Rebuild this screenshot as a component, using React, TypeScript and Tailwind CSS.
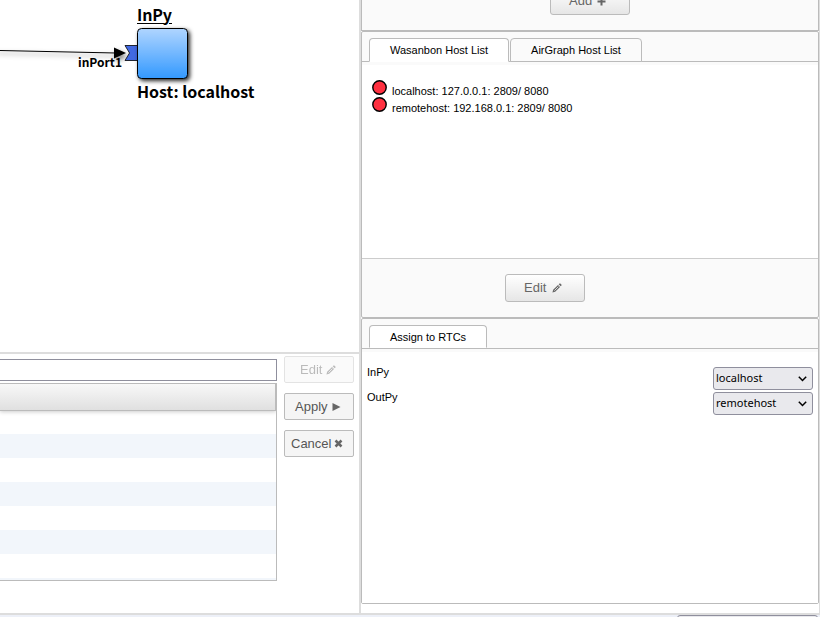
import React from "react";

const Pencil = ({ className = "" }: { className?: string }) => (
  <svg className={className} width="10" height="10" viewBox="0 0 10 10">
    <path d="M.4 9.6L1.200 6.800L6 2L8 4L3.200 8.800z" fill="currentColor" />
    <path d="M6.700 1.300L8 .2L9.800 2L8.700 3.300z" fill="currentColor" />
    <path d="M2.400 7.600L6.400 3.600" stroke="#f4f4f4" strokeWidth=".8" />
  </svg>
);

function Tab({ label, size, active = false }: { label: string; size: string; active?: boolean }) {
  return (
    <div
      className={`${size} flex items-center justify-center rounded-t-[4px] border border-[#bbb] text-[11px] text-black ${
        active ? "border-b-white bg-white" : "bg-[#fafafa]"
      }`}
    >
      {label}
    </div>
  );
}

function Host({ text }: { text: string }) {
  return (
    <div className="flex h-[17px] items-start gap-[5px] text-[11px] leading-[13px] text-black">
      <svg width="15" height="15" viewBox="0 0 15 15">
        <circle cx="7.500" cy="7.500" r="6.700" fill="#ff3040" stroke="#000" strokeWidth="1.400" />
      </svg>
      <span className="pt-[5px]">{text}</span>
    </div>
  );
}

function Assign({ name, host }: { name: string; host: string }) {
  return (
    <div className="flex h-[25px] items-start justify-between pl-[5px] pr-[5px] text-[11px] leading-[13px] text-black">
      <span className="pt-px">{name}</span>
      <div className="mt-[2px] flex h-[23px] w-[100px] items-center justify-between rounded-[3px] border border-[#8f8f9d] bg-[#e9e9ed] pl-[2px] pr-[5px] font-['Noto_Sans',sans-serif]">
        <span className="pb-[2px]">{host}</span>
        <svg width="9" height="6" viewBox="0 0 9 6">
          <path d="M.8.8l3.700 3.700L8.200.8" fill="none" stroke="#000" strokeWidth="1.500" />
        </svg>
      </div>
    </div>
  );
}

function Diagram() {
  return (
    <svg className="block h-[352px] w-[359px]" viewBox="0 0 359 352">
      <defs>
        <linearGradient id="block" x1="0" y1="0" x2="0" y2="1">
          <stop offset="0" stopColor="#b0d5ff" />
          <stop offset="1" stopColor="#3399ff" />
        </linearGradient>
        <filter id="shadow" x="-30%" y="-30%" width="170%" height="170%">
          <feDropShadow dx="2" dy="2" stdDeviation="2.200" floodColor="#000" floodOpacity=".85" />
        </filter>
        <filter id="lineShadow" filterUnits="userSpaceOnUse" x="-10" y="35" width="150" height="40">
          <feDropShadow dx="2" dy="3" stdDeviation="2.500" floodColor="#000" floodOpacity=".5" />
        </filter>
      </defs>
      <g filter="url(#lineShadow)">
        <path d="M-5 50.400L116 53" stroke="#000" strokeWidth="1" />
        <path d="M114 47.500L126 53L114 58.500z" fill="#000" />
      </g>
      <path d="M125 45.500H138V60.500H125L129.500 53z" fill="#4169e1" stroke="#000" strokeWidth=".8" />
      <rect x="137.500" y="28.500" width="50" height="50" rx="4" fill="url(#block)" stroke="#000" filter="url(#shadow)" />
      <g className="font-['Noto_Sans_CJK_JP',sans-serif] font-bold" fill="#000">
        <text x="137" y="21" fontSize="16" textLength="35">InPy</text>
        <text x="137" y="98" fontSize="16" textLength="117.500">Host: localhost</text>
        <text x="78" y="67" fontSize="12" textLength="44">inPort1</text>
      </g>
      <path d="M137 23.500H164M169 23.500H172" stroke="#000" />
    </svg>
  );
}

const sideButton =
  "flex h-[27px] w-[70px] items-center rounded-[2px] border border-[#bbb] bg-[#f5f5f5] text-[13px] text-[#555]";
const barButton =
  "flex h-7 w-20 items-center rounded-[3px] border border-[#bbb] bg-linear-to-b from-white to-[#e6e6e6] text-[13px] text-[#666]";

export default function App() {
  return (
    <div className="flex h-[617px] w-[820px] flex-col overflow-hidden bg-white font-['Liberation_Sans',Arial,sans-serif]">
      <div className="flex h-[613px]">
        <div className="w-[359px]">
          <Diagram />
          <div className="flex h-[261px] border-t-2 border-[#ddd]">
            <div className="w-[277px] pt-[5px]">
              <div className="h-[22px] border border-l-0 border-[#8f8f9d]" />
              <div className="mt-[2px] h-[198px] overflow-hidden border border-l-0 border-[#bbb]">
                <div className="h-[27px] border-b border-r border-[#bbb] bg-linear-to-b from-[#f8f8f8] to-[#e0e0e0] shadow-[0_1px_4px_rgba(0,0,0,0.2)]" />
                <div className="h-[23px]" />
                <div className="h-6 bg-[#f2f6fb]" />
                <div className="h-6" />
                <div className="h-6 bg-[#f2f6fb]" />
                <div className="h-6" />
                <div className="h-6 bg-[#f2f6fb]" />
                <div className="h-6" />
                <div className="h-6 bg-[#f2f6fb]" />
              </div>
            </div>
            <div className="flex flex-col gap-[10px] pl-[7px] pt-[2px]">
              <div className={`${sideButton} gap-1 pl-[15px] opacity-40`}>
                Edit <Pencil />
              </div>
              <div className={`${sideButton} gap-1 pl-[10px]`}>
                Apply
                <svg width="9" height="8" viewBox="0 0 9 8">
                  <path d="M.5 0L8.500 4L.5 8z" fill="#666" />
                </svg>
              </div>
              <div className={`${sideButton} gap-[3px] pl-[6px]`}>
                Cancel
                <svg width="9" height="9" viewBox="0 0 9 9">
                  <path d="M1.500 1.500L7.500 7.500M7.500 1.500L1.500 7.500" stroke="#666" strokeWidth="2.500" />
                </svg>
              </div>
            </div>
          </div>
        </div>
        <div className="w-[461px] border-x-2 border-r border-[#ddd]">
          <div className="flex h-[31px] items-end justify-center border border-t-0 border-[#bbb] bg-[#fafafa] pb-[15px]">
            <div className={`${barButton} gap-[5px] pl-[18px]`}>
              Add
              <svg width="9" height="9" viewBox="0 0 9 9">
                <path d="M4.500 .5V8.500M.5 4.500H8.500" stroke="#666" strokeWidth="2" />
              </svg>
            </div>
          </div>
          <div className="h-[287px] rounded-[2px] border border-[#bbb] bg-[#fafafa]">
            <div className="flex h-[30px] items-end gap-[1px] border-b border-[#bbb] pl-[7px]">
              <div className="-mb-[1px]">
                <Tab label="Wasanbon Host List" size="h-6 w-[140px]" active />
              </div>
              <div className="-mb-[1px]">
                <Tab label="AirGraph Host List" size="h-6 w-[132px]" />
              </div>
            </div>
            <div className="mt-[3px] h-[194px] border-b border-[#ccc] bg-white pl-[10px] pt-[15px]">
              <Host text="localhost: 127.0.0.1: 2809/ 8080" />
              <Host text="remotehost: 192.168.0.1: 2809/ 8080" />
            </div>
            <div className="flex pl-[143px] pt-[15px]">
              <div className={`${barButton} gap-[6px] pl-[18px]`}>
                Edit <Pencil />
              </div>
            </div>
          </div>
          <div className="h-[286px] rounded-[2px] border border-[#bbb] bg-[#fafafa]">
            <div className="flex h-[30px] items-end border-b border-[#bbb] pl-[7px]">
              <Tab label="Assign to RTCs" size="h-[23px] w-[118px] pt-px" active />
            </div>
            <div className="mt-[3px] h-[251px] bg-white pt-[13px]">
              <Assign name="InPy" host="localhost" />
              <Assign name="OutPy" host="remotehost" />
            </div>
          </div>
        </div>
      </div>
      <div className="flex h-1 justify-end border-t-2 border-[#ddd] bg-[#edf0f8] pr-[2px]">
        <div className="h-5 w-[141px] rounded-[3px] border border-[#8f8f9d] bg-[#e9e9ed]" />
      </div>
    </div>
  );
}
